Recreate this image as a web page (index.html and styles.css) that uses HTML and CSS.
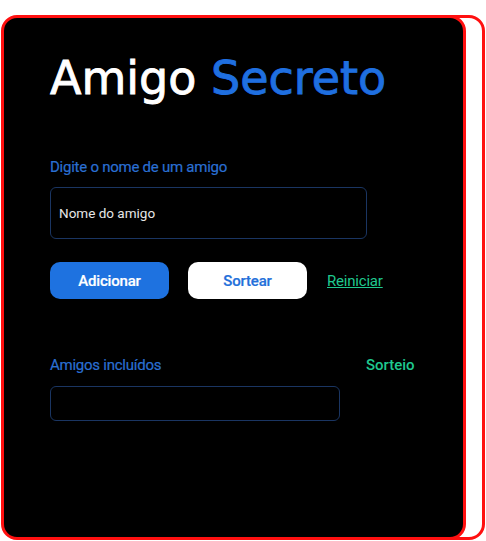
FILE: index.html
```html
<!DOCTYPE html>
<html lang="pt-BR">
<head>
<meta charset="utf-8">
<title>Amigo Secreto</title>
<link rel="stylesheet" href="styles.css">
</head>
<body>
<div class="stack">
  <main class="card">
    <h1 class="title"><span class="title-white">Amigo</span> <span class="title-blue">Secreto</span></h1>
    <label class="label" for="amigo">Digite o nome de um amigo</label>
    <div class="input-box"><input id="amigo" class="input" type="text" placeholder="Nome do amigo"></div>
    <div class="actions">
      <button class="btn btn-primary">Adicionar</button>
      <button class="btn btn-light">Sortear</button>
      <a class="link" href="#">Reiniciar</a>
    </div>
    <div class="results">
      <div class="results-left">
        <div class="label">Amigos incluídos</div>
        <ul class="list"></ul>
      </div>
      <div class="sorteio">Sorteio</div>
    </div>
  </main>
</div>
</body>
</html>
```
FILE: styles.css
```css
html, body {
  margin: 0;
  padding: 0;
  background: #ffffff;
}
body {
  font-family: Roboto, "Noto Sans", sans-serif;
}
.stack {
  position: relative;
  width: 486px;
  height: 541px;
}
.stack::before {
  content: "";
  position: absolute;
  left: 20px;
  top: 0px;
  width: 465px;
  height: 525px;
  box-sizing: border-box;
  border: 3px solid #ff1010;
  border-radius: 16px;
  background: #ffffff;
}
.card {
  position: relative;
  margin: 15px 0 0 1px;
  width: 465px;
  height: 525px;
  box-sizing: border-box;
  border: 3px solid #ff1010;
  border-radius: 16px;
  background: #000000;
  padding: 30px 0 0 46px;
  display: flex;
  flex-direction: column;
}
.title {
  margin: 0;
  font-family: "DejaVu Sans", sans-serif;
  font-weight: 500;
  font-size: 46px;
  line-height: 60px;
  -webkit-text-stroke: 0.9px currentColor;
}
.title-white { color: #ffffff; }
.title-blue { color: #1f6fe0; }
.label {
  margin-top: 49px;
  color: #2a6fd2;
  font-size: 15px;
  line-height: 20px;
  letter-spacing: -0.25px;
  -webkit-text-stroke: 0.2px currentColor;
}
.input-box {
  margin-top: 10px;
  width: 317px;
  height: 52px;
  box-sizing: border-box;
  border: 1px solid #1a3562;
  border-radius: 6px;
  display: flex;
  align-items: center;
  padding-left: 8px;
}
.input {
  border: 0;
  outline: 0;
  background: transparent;
  font-family: Roboto, sans-serif;
  font-size: 13.5px;
  color: #e8e8e8;
  width: 100%;
  padding: 0;
}
.input::placeholder { color: #e6e6e6; opacity: 1; }
.actions {
  margin-top: 23px;
  display: flex;
  align-items: center;
  gap: 19px;
}
.btn {
  width: 119px;
  height: 37px;
  border-radius: 10px;
  border: 0;
  font-family: Roboto, sans-serif;
  font-size: 15px;
  font-weight: 500;
  letter-spacing: -0.2px;
  -webkit-text-stroke: 0.2px currentColor;
}
.btn-primary { background: #1e72e0; color: #ffffff; }
.btn-light { background: #ffffff; color: #2470da; }
.link {
  margin-left: 1px;
  color: #1fc98f;
  font-size: 15px;
  letter-spacing: -0.2px;
  text-decoration: underline;
}
.results {
  margin-top: 56px;
  display: flex;
  align-items: flex-start;
}
.results-left { display: flex; flex-direction: column; }
.results .label { margin-top: 0; }
.list {
  margin: 11px 0 0 0;
  padding: 0;
  width: 290px;
  height: 35px;
  box-sizing: border-box;
  border: 1px solid #1a3562;
  border-radius: 6px;
}
.sorteio {
  margin-left: 26px;
  color: #1fc98f;
  font-size: 15px;
  font-weight: 500;
  line-height: 20px;
}
```
